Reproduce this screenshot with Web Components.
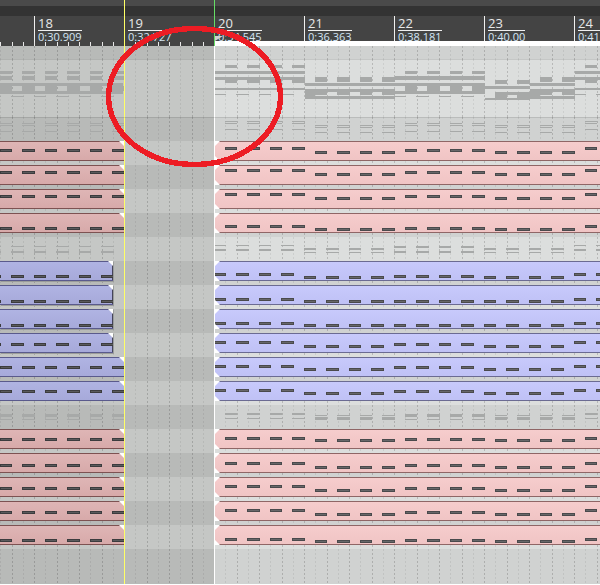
<!DOCTYPE html>
<html>
<head>
<meta charset="utf-8">
<title>Timeline</title>
<style>
  html, body { margin: 0; padding: 0; background: #fff; overflow: hidden; }
  daw-timeline { width: 600px; height: 584px; }
</style>
</head>
<body>
<daw-timeline></daw-timeline>
<script>
// note slots inside one bar: [offset, width]
const SLOTS = {
  p: [[11, 12], [33, 13], [56, 12], [78, 13]],
  b: [[0, 12], [22, 13], [45, 12], [67, 13]],
};
const LEFT_BARS = [-56, 34];
const RIGHT_BARS = [214, 304, 394, 484, 574];

class DawClip extends HTMLElement {
  constructor() {
    super();
    this.attachShadow({ mode: 'open' });
  }

  connectedCallback() {
    const from = +this.getAttribute('from');
    const to = +this.getAttribute('to');
    const muted = this.hasAttribute('muted');
    const slots = SLOTS[this.getAttribute('slots')];
    const tops = this.getAttribute('tops').split(' ').map(Number);
    const bars = muted ? LEFT_BARS.map(b => [b, tops[0]]) : RIGHT_BARS.map((b, i) => [b, tops[i]]);

    const notes = bars.flatMap(([bar, top]) => slots.map(([x, w]) =>
      `<i style="left:${bar + x - from}px;top:${top}px;width:${w}px"></i>`)).join('');

    this.shadowRoot.innerHTML = `
      <style>
        :host {
          position: absolute;
          top: 0;
          left: ${from}px;
          width: ${to - from}px;
          height: 20px;
          overflow: hidden;
          background: linear-gradient(var(--c1), var(--c2));
          box-shadow: inset 0 1px var(--edge), inset 0 -1px var(--edge);
        }
        :host([kind=pink]) { --c1: #f6cdcd; --c2: #f0c4c4; --edge: #8f6666; }
        :host([kind=blue]) { --c1: #c8cafc; --c2: #bfc1f5; --edge: #6b6b92; }
        :host([kind=pink][muted]) { --c1: #dfb6b6; --c2: #d7a9a9; --edge: #7d5252; }
        :host([kind=blue][muted]) { --c1: #b0b4e3; --c2: #a6a9d9; --edge: #5a5a8c; }
        :host([short]) { box-shadow: inset 0 1px var(--edge), inset 0 -1px var(--edge), inset -1px 0 #44445a, 1px 1px #9a9c9a; }
        i {
          position: absolute;
          height: 3px;
          box-sizing: border-box;
          background: #676769;
          border: 1px solid #4a4a4c;
        }
        :host([muted]) i { background: #5a5a5c; border-color: #3c3c3e; }
        b { position: absolute; width: 5px; height: 5px; background: #fff; }
        .tr { right: 0; top: 0; clip-path: polygon(0 0, 100% 0, 100% 100%); }
        .tl { left: 0; top: 0; clip-path: polygon(0 0, 100% 0, 0 100%); }
        .bl { left: 0; bottom: 0; clip-path: polygon(0 0, 100% 100%, 0 100%); }
      </style>
      ${notes}
      ${muted ? '<b class="tr"></b>' : '<b class="tl"></b><b class="bl"></b>'}
    `;
  }
}

class DawLane extends HTMLElement {
  constructor() {
    super();
    this.attachShadow({ mode: 'open' });
  }

  connectedCallback() {
    const marks = (this.getAttribute('marks') || '').split(';').filter(Boolean).map(m => {
      const [x, y, w, h] = m.split(',');
      return `<rect x="${x}" y="${y}" width="${w}" height="${h}"/>`;
    }).join('');

    let lines = '';
    for (let i = -3; i <= 50; i++) {
      // 124 and 214 are the playhead and the region edge, they stay solid
      if (i === 8 || i === 16) continue;
      const x = Math.round(34 + i * 11.25) + .5;
      const opacity = i % 2 === 0 ? .17 : .07;
      lines += `<line x1="${x}" x2="${x}" y1="0" y2="100%" stroke="#000" stroke-opacity="${opacity}" stroke-dasharray="2 2"/>`;
    }

    this.shadowRoot.innerHTML = `
      <style>
        :host {
          display: block;
          position: relative;
          height: var(--h, 24px);
          box-sizing: border-box;
          --l: #c5c7c5;
          --m: #c5c7c5;
          --r: #dcdedd;
        }
        :host([tone=d]) { --l: #b8bab8; --m: #b8bab8; --r: #d0d2d1; }
        .cells {
          display: grid;
          grid-template-columns: 124px 1px 89px 1px 1fr;
          height: 100%;
        }
        .cells div:nth-child(1) { background: var(--l); }
        .cells div:nth-child(2) { background: #ffff66; }
        .cells div:nth-child(3) { background: var(--m); }
        .cells div:nth-child(4) { background: #fff; }
        .cells div:nth-child(5) { background: var(--r); }
        svg { position: absolute; left: 0; top: 0; width: 600px; height: 100%; shape-rendering: crispEdges; }
        .marks { fill: #a7a9a8; }
        :host([line]) .top { position: absolute; left: 0; right: 0; top: 0; height: 1px; background: rgba(0,0,0,.1); }
      </style>
      <div class="cells"><div></div><div></div><div></div><div></div><div></div></div>
      <svg>${lines}<g class="marks">${marks}</g></svg>
      <div class="top"></div>
      <slot></slot>
    `;
  }
}

class DawRuler extends HTMLElement {
  constructor() {
    super();
    this.attachShadow({ mode: 'open' });
  }

  connectedCallback() {
    const bars = [
      [18, '0:30.909'], [19, '0:32.727'], [20, '0:34.545'], [21, '0:36.363'],
      [22, '0:38.181'], [23, '0:40.00'], [24, '0:41.818'],
    ];

    let ticks = '';
    for (let i = -3; i <= 15; i++) {
      ticks += `<rect x="${Math.round(34 + i * 11.25)}" y="0" width="1" height="4"/>`;
    }

    this.shadowRoot.innerHTML = `
      <style>
        :host {
          display: block;
          position: relative;
          height: 46px;
          overflow: hidden;
          background: #444;
          font-family: "Open Sans", "Liberation Sans", sans-serif;
        }
        .strip-a { height: 6px; background: #4a4a4a; }
        .strip-b { height: 10px; background: #333; }
        .bars { display: flex; height: 30px; padding-left: 34px; }
        .bar {
          flex: 0 0 90px;
          box-sizing: border-box;
          border-left: 1px solid #f0f0f0;
          padding-left: 3px;
          display: flex;
        }
        .label { display: inline-block; }
        .num {
          font-size: 13px;
          line-height: 13px;
          padding-top: 1px;
          color: #e8e8e8;
          border-bottom: 1px solid #f0f0f0;
        }
        .time {
          font-size: 11px;
          line-height: 12px;
          color: #d5e6f5;
          white-space: nowrap;
        }
        .ticks { position: absolute; left: 0; bottom: 0; width: 215px; height: 4px; fill: #e8e8e8; shape-rendering: crispEdges; }
        .white { position: absolute; left: 215px; right: 0; bottom: 0; height: 5px; background: #fff; }
        .corner { position: absolute; left: 215px; top: 36px; width: 8px; height: 5px; background: #d0d0d0; clip-path: polygon(0 0, 100% 0, 0 100%); }
        .yellow, .green { position: absolute; top: 0; width: 1px; height: 46px; }
        .yellow { left: 124px; background: #ffff66; }
        .green { left: 214px; background: #66dd66; }
      </style>
      <div class="strip-a"></div>
      <div class="strip-b"></div>
      <div class="bars">
        ${bars.map(([n, t]) => `
          <div class="bar"><div class="label"><div class="num">${n}</div><div class="time">${t}</div></div></div>
        `).join('')}
      </div>
      <svg class="ticks">${ticks}</svg>
      <div class="white"></div>
      <div class="corner"></div>
      <div class="yellow"></div>
      <div class="green"></div>
    `;
  }
}

// helpers for the grey note marks, y values are relative to the lane top
const inSlots = (bar, kind, y, h, pick = [0, 1, 2, 3], maxX = 600) => pick.map(i => {
  const [x, w] = SLOTS[kind][i];
  const start = Math.max(bar + x, 0);
  return [start, y, Math.min(bar + x + w, maxX) - start, h];
}).filter(r => r[2] > 0);
const wide = (x0, x1, y, h) => [[x0, y, x1 - x0, h]];
const toMarks = rects => rects.map(r => r.join(',')).join(';');

function topLaneMarks() {
  const t = 59, out = [];
  const add = rs => out.push(...rs);
  const oneBar = (bar, left) => {
    const mx = left ? 124 : 600;
    add(inSlots(bar, 'p', 71 - t, 3, undefined, mx));
    add(inSlots(bar, 'p', 76 - t, 4, undefined, mx));
    add(inSlots(bar, 'p', 86 - t, 5, undefined, mx));
    add(inSlots(bar, 'b', 96 - t, 1, undefined, mx));
  };
  oneBar(-56, true);
  oneBar(34, true);
  add(wide(0, 123, 83 - t, 3));
  add(wide(0, 123, 91 - t, 3));

  const outer = bar => {
    const x0 = Math.max(bar + 1, 215);
    add(inSlots(bar, 'p', 65 - t, 3));
    add(wide(x0, bar + 91, 71 - t, 3));
    add(wide(x0, bar + 91, 77 - t, 3));
    add(inSlots(bar, 'p', 80 - t, 3));
    add(wide(x0, bar + 91, 88 - t, 2));
    add(inSlots(bar, 'b', 94 - t, 1).map(r => r[0] < 215 ? [215, r[1], r[2] - 1, r[3]] : r));
  };
  const rising = (bar, pick, x0, x1) => {
    add(inSlots(bar, 'p', 77 - t, 5, pick));
    add(wide(x0, x1, 83 - t, 3));
    add(wide(x0, x1, 89 - t, 3));
    add(inSlots(bar, 'p', 92 - t, 3, pick));
    add(wide(x0, Math.min(x0 + 10, x1), 92 - t, 4));
    add(wide(x0, x1, 96 - t, 3));
  };

  outer(214);
  rising(304, [0, 1, 2, 3], 305, 395);

  // bar 22
  add(inSlots(394, 'p', 71 - t, 3));
  add(wide(395, 485, 76 - t, 4));
  add(wide(395, 485, 83 - t, 3));
  add(inSlots(394, 'p', 86 - t, 5));
  add(wide(395, 485, 91 - t, 3));
  add(inSlots(394, 'b', 96 - t, 1));

  // bar 23, first half low, second half like bar 21
  add(inSlots(484, 'p', 80 - t, 4, [0, 1]));
  add(wide(485, 530, 86 - t, 3));
  add(wide(495, 530, 92 - t, 3));
  add(inSlots(484, 'p', 95 - t, 3, [0, 1]));
  add(wide(485, 530, 98 - t, 2));
  rising(484, [2, 3], 530, 575);

  outer(574);
  return toMarks(out);
}

// per region rows: [y, h] pairs for left, bar 20..24
function rowMarks(kind, top, left, a, b, c) {
  const out = [];
  const put = (bar, rows, mx) => rows.forEach(([y, h]) => {
    out.push(...inSlots(bar, kind, y - top, h, undefined, mx).map(r => {
      if (bar === 214 && r[0] < 215) return [215, r[1], r[2] - 1, r[3]];
      return r;
    }));
  });
  put(-56, left, 124);
  put(34, left, 124);
  put(214, a);
  put(304, b);
  put(394, c);
  put(484, b);
  put(574, a);
  return toMarks(out);
}

class DawTimeline extends HTMLElement {
  constructor() {
    super();
    this.attachShadow({ mode: 'open' });
  }

  connectedCallback() {
    const lowRow = rowMarks('p', 117,
      [[123, 1], [125, 1], [131, 1]],
      [[121, 1], [123, 1], [129, 1]],
      [[125, 1], [127, 1], [132, 1]],
      [[123, 1], [125, 1], [131, 1]]);
    const row237 = rowMarks('b', 237,
      [[246, 1], [251, 2]],
      [[245, 1], [249, 2]],
      [[248, 2], [252, 1]],
      [[246, 2], [251, 2]]);
    const row405 = rowMarks('p', 405,
      [[414, 3], [419, 1]],
      [[413, 2], [418, 1]],
      [[415, 1], [417, 3]],
      [[414, 3], [419, 1]]);

    // kind, left slots, short, left top, tops for bars 20..24
    const clipLane = (tone, kind, slots, short, l, rest) => `
      <daw-lane tone="${tone}">
        <daw-clip kind="${kind}" muted ${short ? 'short' : ''} slots="${slots}" from="0" to="${short ? 113 : 124}" tops="${l}"></daw-clip>
        <daw-clip kind="${kind}" slots="${kind === 'blue' ? 'b' : 'p'}" from="215" to="600" tops="${rest}"></daw-clip>
      </daw-lane>`;

    this.shadowRoot.innerHTML = `
      <style>
        :host { display: block; position: relative; overflow: hidden; }
        .circle { position: absolute; left: 0; top: 0; width: 600px; height: 584px; pointer-events: none; shape-rendering: crispEdges; }
      </style>
      <daw-ruler></daw-ruler>
      <daw-lane tone="d" style="--h:13px"></daw-lane>
      <daw-lane tone="l" line style="--h:58px" marks="${topLaneMarks()}"></daw-lane>
      <daw-lane tone="d" line marks="${lowRow}"></daw-lane>
      ${clipLane('l', 'pink', 'p', false, 8, '6 10 8 10 6')}
      ${clipLane('d', 'pink', 'p', false, 6, '4 8 6 8 4')}
      ${clipLane('l', 'pink', 'p', false, 6, '4 8 6 8 4')}
      ${clipLane('d', 'pink', 'p', false, 14, '12 15 14 15 12')}
      <daw-lane tone="l" marks="${row237}"></daw-lane>
      ${clipLane('d', 'blue', 'b', true, 14, '12 15 14 15 12')}
      ${clipLane('l', 'blue', 'b', true, 15, '13 15 15 15 13')}
      ${clipLane('d', 'blue', 'b', true, 15, '13 15 15 15 13')}
      ${clipLane('l', 'blue', 'b', true, 10, '8 12 10 12 8')}
      ${clipLane('d', 'blue', 'p', false, 9, '8 11 9 11 8')}
      ${clipLane('l', 'blue', 'p', false, 9, '8 11 9 11 8')}
      <daw-lane tone="d" marks="${row405}"></daw-lane>
      ${clipLane('l', 'pink', 'p', false, 9, '8 10 9 10 8')}
      ${clipLane('d', 'pink', 'p', false, 11, '9 13 11 13 9')}
      ${clipLane('l', 'pink', 'p', false, 10, '8 12 10 12 8')}
      ${clipLane('d', 'pink', 'p', false, 10, '8 12 10 12 8')}
      ${clipLane('l', 'pink', 'p', false, 14, '13 15 14 15 13')}
      <daw-lane tone="d" style="--h:35px"></daw-lane>
      <svg class="circle">
        <ellipse cx="194.5" cy="96.5" rx="86" ry="68" fill="none" stroke="#ed1c24" stroke-width="5.5"/>
      </svg>
    `;
  }
}

customElements.define('daw-clip', DawClip);
customElements.define('daw-lane', DawLane);
customElements.define('daw-ruler', DawRuler);
customElements.define('daw-timeline', DawTimeline);
</script>
</body>
</html>
